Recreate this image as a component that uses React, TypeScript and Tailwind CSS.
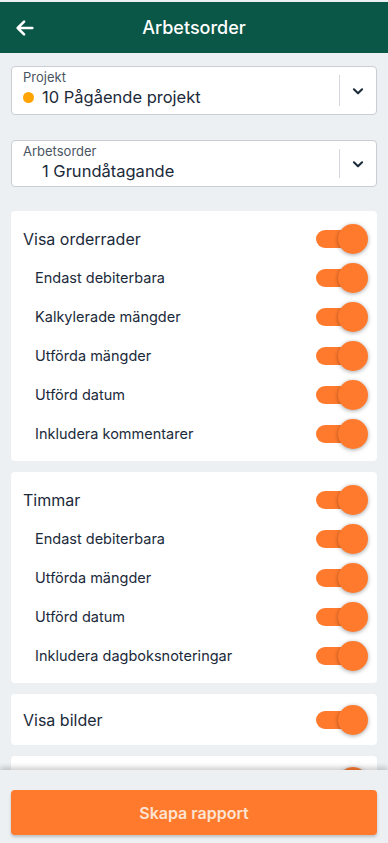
import { useState } from "react";

type Row = { label: string; sub?: boolean };

const orderRows: Row[] = [
  { label: "Visa orderrader" },
  { label: "Endast debiterbara", sub: true },
  { label: "Kalkylerade mängder", sub: true },
  { label: "Utförda mängder", sub: true },
  { label: "Utförd datum", sub: true },
  { label: "Inkludera kommentarer", sub: true },
];

const timeRows: Row[] = [
  { label: "Timmar" },
  { label: "Endast debiterbara", sub: true },
  { label: "Utförda mängder", sub: true },
  { label: "Utförd datum", sub: true },
  { label: "Inkludera dagboksnoteringar", sub: true },
];

function Toggle({ on, onChange }: { on: boolean; onChange: () => void }) {
  return (
    <button
      type="button"
      onClick={onChange}
      className={`relative h-[18px] w-[44px] rounded-full ${on ? "bg-[#ff7a2d]" : "bg-gray-300"}`}
    >
      <span
        className={`absolute top-[-6px] h-[30px] w-[30px] rounded-full shadow-[0_1px_4px_rgba(0,0,0,0.35)] ${
          on ? "right-[-8px] bg-[#ff7a2d]" : "left-[-8px] bg-white"
        }`}
      />
    </button>
  );
}

function ToggleRow({ row }: { row: Row }) {
  const [on, setOn] = useState(true);
  return (
    <div className={`flex h-[39px] items-center justify-between pr-[17px] ${row.sub ? "pl-[24px]" : "pl-[12px]"}`}>
      <span className={row.sub ? "text-[14.5px]" : "text-[16px]"}>{row.label}</span>
      <Toggle on={on} onChange={() => setOn(!on)} />
    </div>
  );
}

function Card({ rows, tight }: { rows: Row[]; tight?: boolean }) {
  return (
    <div className={`rounded-[4px] bg-white ${tight ? "py-[6px]" : "py-[8px]"}`}>
      {rows.map((r, i) => (
        <ToggleRow key={r.label + i} row={r} />
      ))}
    </div>
  );
}

function Chevron() {
  return (
    <svg width="14" height="14" viewBox="0 0 24 24" fill="none" stroke="#1c2b3a" strokeWidth="3.5" strokeLinecap="round" strokeLinejoin="round">
      <path d="M5 9l7 7 7-7" />
    </svg>
  );
}

function Select({ label, value, dot, tall }: { label: string; value: string; dot?: boolean; tall?: boolean }) {
  return (
    <div className={`flex rounded-[4px] border border-[#c9ced4] bg-white ${tall ? "h-[49px]" : "h-[47px]"}`}>
      <div className="flex-1 pl-[11px] pt-[2px]">
        <div className="text-[13px] leading-[17px] text-[#4a5563]">{label}</div>
        <div className="flex items-center gap-[8px] text-[16.5px] leading-[22px]">
          {dot ? <span className="h-[11px] w-[11px] rounded-full bg-[#ffa400]" /> : <span className="w-[11px]" />}
          <span>{value}</span>
        </div>
      </div>
      <div className="my-[8px] w-px bg-[#d4d8dc]" />
      <div className="flex w-[36px] items-center justify-center">
        <Chevron />
      </div>
    </div>
  );
}

export default function App() {
  return (
    <div
      className="flex h-[843px] w-[388px] flex-col overflow-hidden bg-[#edf0f3] text-[#1b2a3a]"
      style={{ fontFamily: "Inter, 'Noto Sans', sans-serif" }}
    >
      <div className="h-[2px]" />
      <header className="flex h-[51px] shrink-0 items-center bg-[#0a5647] px-[14px] text-white">
        <svg width="22" height="22" viewBox="0 0 24 24" fill="none" stroke="white" strokeWidth="2.8" strokeLinecap="round" strokeLinejoin="round">
          <path d="M20 12H4M11 5l-7 7 7 7" />
        </svg>
        <h1 className="flex-1 pr-[22px] text-center text-[18px] font-medium">Arbetsorder</h1>
      </header>

      <div className="flex-1 overflow-hidden px-[11px] pt-[13px]">
        <Select label="Projekt" value="10 Pågående projekt" dot tall />
        <div className="h-[25px]" />
        <Select label="Arbetsorder" value="1 Grundåtagande" />
        <div className="mt-[24px] flex flex-col gap-[11px]">
          <Card rows={orderRows} />
          <Card rows={timeRows} />
          <Card rows={[{ label: "Visa bilder" }]} tight />
          <Card rows={[{ label: "" }]} tight />
        </div>
      </div>

      <div className="relative z-10 shrink-0 bg-[#edf0f3] px-[11px] pt-[20px] pb-[8px] shadow-[0_-3px_5px_rgba(0,0,0,0.18)]">
        <button
          type="button"
          className="h-[45px] w-full rounded-[4px] bg-[#ff7a2d] text-[16px] font-semibold text-[#fde3d2] shadow-[0_2px_3px_rgba(0,0,0,0.2)]"
        >
          Skapa rapport
        </button>
      </div>
    </div>
  );
}
